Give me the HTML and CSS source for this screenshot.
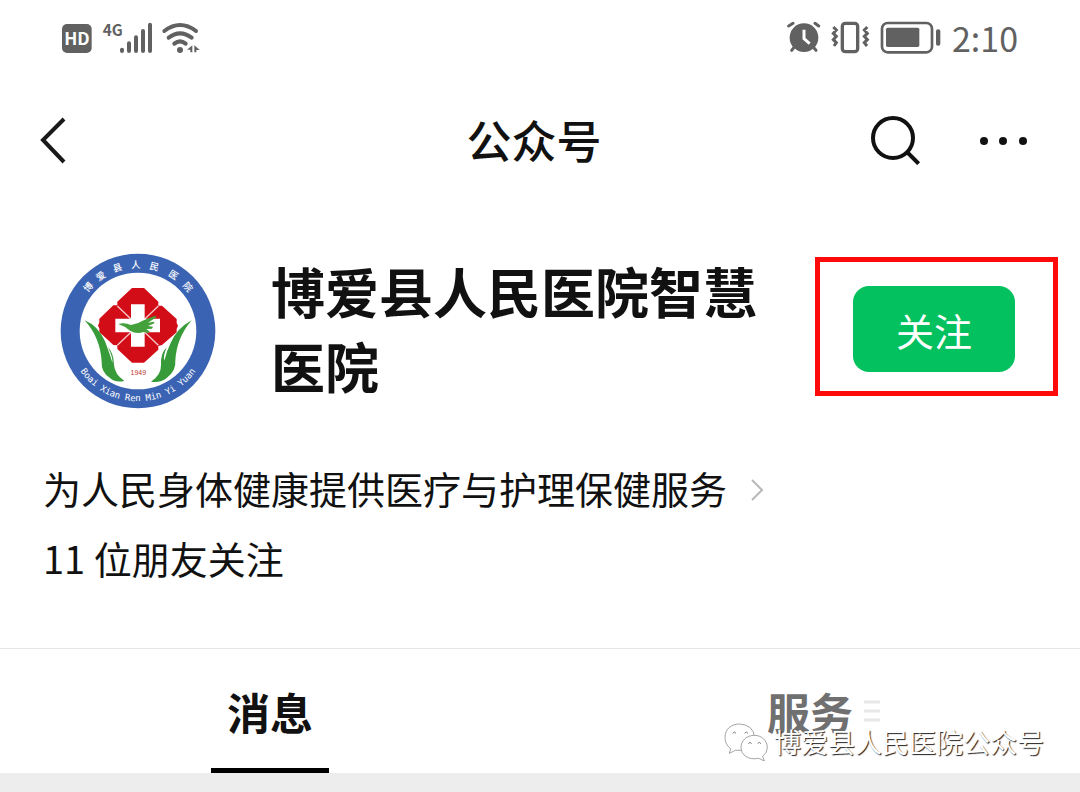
FILE: index.html
```html
<!DOCTYPE html>
<html lang="zh-CN">
<head>
<meta charset="utf-8">
<meta name="viewport" content="width=device-width, initial-scale=1">
<title>公众号</title>
<link rel="stylesheet" href="styles.css">
</head>
<body>
<div class="status">
  <svg class="status-left" viewBox="36 30 414 99" aria-hidden="true">
    <rect x="36" y="39" width="89" height="87" rx="15" fill="#616161"/>
    <text x="81" y="102" class="hd" text-anchor="middle">HD</text>
    <text x="158" y="75" class="net">4G</text>
    <g stroke="#616161" stroke-width="12" stroke-linecap="round">
      <path d="M216 116v4M237 97v23M258 79v41M279 60v60M300 41v79"/>
    </g>
    <g fill="none" stroke="#616161" stroke-width="12" stroke-linecap="round">
      <path d="M343 60Q390 24 438 60M356 80Q390 54 425 80M373 98Q390 84 407 98"/>
    </g>
    <circle cx="390" cy="117" r="9" fill="#616161"/>
    <path d="M427 103v21h-6v-8h-10zM433 103l16 14h-10v7h-6z" fill="#616161"/>
  </svg>
  <div class="status-right">
    <svg class="status-icons" viewBox="51 30 462 102" aria-hidden="true">
      <g stroke="#616161" stroke-linecap="round" fill="none">
        <path d="M56 48l13-8M146 48l-11-8" stroke-width="9"/>
        <path d="M72 112l-7 9M130 112l8 9" stroke-width="9"/>
      </g>
      <circle cx="102" cy="83" r="43" fill="#616161"/>
      <path d="M102 59v27l17 15" fill="none" stroke="#fff" stroke-width="9"/>
      <rect x="217" y="40" width="46" height="85" rx="9" fill="none" stroke="#616161" stroke-width="10"/>
      <path d="M190 51l9 9-9 10 9 9-9 10 9 9-7 10M292 51l-9 9 9 10-9 9 9 10-9 9 8 10" fill="none" stroke="#616161" stroke-width="9"/>
      <rect x="336" y="39" width="150" height="88" rx="17" fill="none" stroke="#616161" stroke-width="8"/>
      <rect x="348" y="53" width="100" height="58" rx="5" fill="#616161"/>
      <rect x="498" y="58" width="13" height="49" rx="6" fill="#616161"/>
    </svg>
    <span class="clock">2:10</span>
  </div>
</div>

<header class="nav">
  <button class="icon-btn" aria-label="返回">
    <svg width="28" height="48" viewBox="0 0 28 48"><path d="M26 3L5 24L26 46" fill="none" stroke="#191919" stroke-width="4"/></svg>
  </button>
  <h1 class="nav-title">公众号</h1>
  <div class="nav-actions">
    <button class="icon-btn" aria-label="搜索">
      <svg width="50" height="50" viewBox="0 0 150 150"><circle cx="66" cy="69" r="60" fill="none" stroke="#111" stroke-width="12"/><path d="M108 111l35 35" stroke="#111" stroke-width="12"/></svg>
    </button>
    <button class="icon-btn" aria-label="更多">
      <svg width="48" height="12" viewBox="0 0 48 12" fill="#111"><circle cx="4" cy="7" r="4"/><circle cx="23" cy="7" r="4"/><circle cx="43" cy="7" r="4"/></svg>
    </button>
  </div>
</header>

<main>
  <section class="profile">
    <svg class="avatar" viewBox="30 24 468 468" role="img" aria-label="博爱县人民医院">
      <defs>
        <path id="arc-top" d="M75 258A189 189 0 0 1 453 258"/>
        <path id="arc-bottom" d="M53 258A211 211 0 0 0 475 258"/>
      </defs>
      <circle cx="264" cy="258" r="232" fill="#3b63b3"/>
      <circle cx="264" cy="258" r="175" fill="#fff"/>
      <path d="M246 129H282L325 170L325 182H336L380 222V234L384 242L380 252V262L336 300L325 303V314L282 353H246L202 312V301L190 300L148 261V250L144 242L148 232V221L190 181H202V170Z" fill="#d20d18"/>
      <path d="M202 183L325 301M325 183L202 301" stroke="#f6c9c9" stroke-width="4"/>
      <path d="M243 178h41v43h46v41h-46v43h-41v-43h-47v-41h47z" fill="#fff"/>
      <path d="M205 237Q224 232 243 240Q263 238 281 226L316 212L319 217L294 233L312 230L313 235L294 243L309 245L306 251L289 252L299 260L295 264L280 261Q260 269 240 257Q226 244 205 237Z" fill="#43a03b"/>
      <path d="M104 226Q145 243 165 289Q179 326 187 353Q189 337 174 307Q191 323 192 360Q194 388 223 408Q197 414 181 400Q153 382 155 351Q151 278 104 226Z" fill="#369b38"/>
      <path d="M425 226Q381 250 363 292Q350 318 343 347Q339 333 350 307Q331 326 333 360Q334 389 303 410Q332 414 350 399Q379 378 376 346Q380 278 425 226Z" fill="#369b38"/>
      <text x="265" y="389" class="year" text-anchor="middle">1949</text>
      <g class="ring-cn" text-anchor="middle">
        <text><textPath href="#arc-top" startOffset="23%">博</textPath></text>
        <text><textPath href="#arc-top" startOffset="31%">爱</textPath></text>
        <text><textPath href="#arc-top" startOffset="40%">县</textPath></text>
        <text><textPath href="#arc-top" startOffset="49%">人</textPath></text>
        <text><textPath href="#arc-top" startOffset="58%">民</textPath></text>
        <text><textPath href="#arc-top" startOffset="68%">医</textPath></text>
        <text><textPath href="#arc-top" startOffset="77%">院</textPath></text>
      </g>
      <text class="ring-en" text-anchor="middle"><textPath href="#arc-bottom" startOffset="50%">Boai Xian Ren Min Yi Yuan</textPath></text>
    </svg>
    <h2 class="name">博爱县人民医院智慧医院</h2>
    <div class="highlight"><button class="follow">关注</button></div>
  </section>

  <section class="about">
    <a class="desc" href="#about">为人民身体健康提供医疗与护理保健服务
      <svg width="16" height="28" viewBox="0 0 16 28" aria-hidden="true"><path d="M3 6l10 10L3 26" fill="none" stroke="#b8b8b8" stroke-width="2"/></svg>
    </a>
    <p class="friends">11 位朋友关注</p>
  </section>

  <nav class="tabs">
    <a class="tab tab-active" href="#messages">消息</a>
    <a class="tab tab-muted" href="#services"><span class="tab-label">服务<svg class="menu-mark" width="16" height="22" viewBox="0 0 16 22" aria-hidden="true"><path d="M0 2h16M0 11h16M0 20h16" stroke="#e8e8e8" stroke-width="3"/></svg></span></a>
    <div class="watermark">
      <svg width="44" height="38" viewBox="0 0 132 114" aria-hidden="true">
        <g fill="#fff" stroke="#777" stroke-width="2">
          <path d="M46 3C20 3 3 20 3 43Q3 65 20 77L16 91L34 82H50Q92 80 92 43Q88 5 46 3Z"/>
          <path d="M91 37C67 37 51 54 51 73C51 97 74 112 104 106L121 114L116 100Q130 89 130 74C130 53 113 37 91 37Z"/>
          <path d="M26 31q5-8 10 0M62 31q5-8 10 0M73 62q5-8 10 0M101 62q5-8 10 0" fill="none" stroke-width="3"/>
        </g>
      </svg>
      <span>博爱县人民医院公众号</span>
    </div>
  </nav>
</main>
</body>
</html>
```
FILE: styles.css
```css
* {
  box-sizing: border-box;
}

body {
  margin: 0;
  min-height: 100vh;
  background: #ededed;
  color: #111;
  font-family: "Noto Sans CJK SC", "Noto Sans", sans-serif;
}

h1, h2, p {
  margin: 0;
}

a {
  color: inherit;
  text-decoration: none;
}

button {
  font-family: inherit;
  border: 0;
  cursor: pointer;
}

svg {
  display: block;
}

.status {
  display: flex;
  justify-content: space-between;
  align-items: center;
  height: 74px;
  padding: 0 62px;
  background: #fff;
}

.status-left {
  width: 138px;
  height: 33px;
  overflow: visible;
}

.status-icons {
  width: 154px;
  height: 34px;
}

.status-right {
  display: flex;
  align-items: center;
  gap: 11px;
}

.clock {
  padding-top: 2px;
  color: #616161;
  font-size: 34px;
  line-height: 40px;
}

.hd {
  fill: #fff;
  font: bold 52px "Noto Sans CJK SC", sans-serif;
}

.net {
  fill: #616161;
  font: bold 46px "Noto Sans CJK SC", sans-serif;
}

.nav {
  display: grid;
  grid-template-columns: 1fr auto 1fr;
  align-items: center;
  height: 132px;
  padding: 0 52px 0 38px;
  background: #fff;
}

.icon-btn {
  justify-self: start;
  padding: 0;
  background: none;
}

.nav-title {
  padding-left: 2px;
  font-size: 45px;
  font-weight: 500;
  line-height: 60px;
}

.nav-actions {
  display: flex;
  justify-content: flex-end;
  align-items: center;
  gap: 59px;
}

.profile {
  display: flex;
  align-items: flex-start;
  padding: 47px 22px 44px 60px;
  background: #fff;
}

.avatar {
  flex: none;
  width: 156px;
  height: 156px;
}

.ring-cn {
  fill: #fff;
  font-size: 28px;
  font-weight: 500;
}

.ring-en {
  fill: #fff;
  font: 27px "DejaVu Sans Mono", monospace;
}

.year {
  fill: #c0392b;
  font: 21px "Liberation Sans", sans-serif;
}

.name {
  flex: 1;
  padding: 0 42px 0 55px;
  font-size: 54px;
  font-weight: 700;
  line-height: 75px;
}

.highlight {
  flex: none;
  margin-top: 4px;
  padding: 24px 38px 19px 33px;
  border: 5px solid #ff0a0a;
}

.follow {
  display: block;
  width: 162px;
  height: 86px;
  padding: 0;
  border-radius: 16px;
  background: #04c160;
  color: #fff;
  font-size: 38px;
}

.about {
  padding: 0 43px 55px;
  background: #fff;
  font-size: 38px;
  line-height: 70px;
}

.desc {
  display: flex;
  align-items: center;
  gap: 22px;
}

.tabs {
  position: relative;
  display: flex;
  height: 125px;
  border-top: 1px solid #e5e5e5;
  background: #fff;
}

.tab {
  flex: 1;
  display: flex;
  justify-content: center;
  font-size: 43px;
  font-weight: 700;
  line-height: 124px;
}

.tab-active::after {
  content: "";
  position: absolute;
  bottom: 0;
  width: 118px;
  height: 5px;
  background: #000;
}

.tab-muted {
  color: #707070;
}

.tab-label {
  position: relative;
}

.menu-mark {
  position: absolute;
  top: 51px;
  left: 97px;
}

.watermark {
  position: absolute;
  right: 36px;
  bottom: 11px;
  display: flex;
  align-items: center;
  gap: 6px;
  color: #fff;
  font-size: 27px;
  line-height: 40px;
  text-shadow: 1px 1px 1px #222;
}
```
